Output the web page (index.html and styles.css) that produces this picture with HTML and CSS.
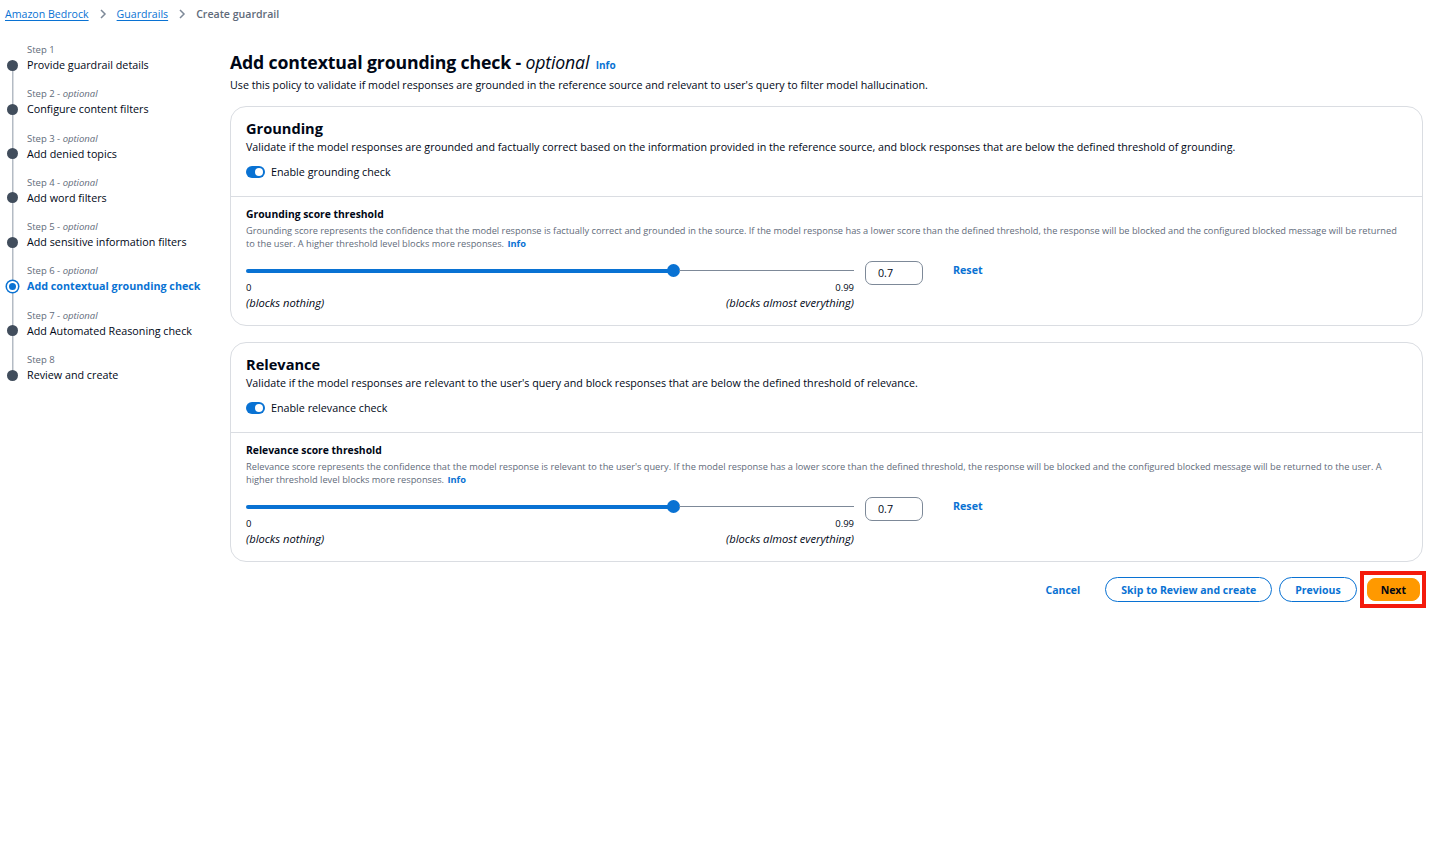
FILE: index.html
```html
<!DOCTYPE html>
<html lang="en">
<head>
<meta charset="utf-8">
<title>Create guardrail</title>
<link rel="stylesheet" href="styles.css">
</head>
<body>
<nav class="crumbs">
  <a href="#" class="crumb-link">Amazon Bedrock</a>
  <svg class="chev" width="10" height="10" viewBox="0 0 10 10"><path d="M3 1l4 4-4 4" fill="none" stroke="#7d8998" stroke-width="1.5"/></svg>
  <a href="#" class="crumb-link">Guardrails</a>
  <svg class="chev" width="10" height="10" viewBox="0 0 10 10"><path d="M3 1l4 4-4 4" fill="none" stroke="#7d8998" stroke-width="1.5"/></svg>
  <span class="crumb-current">Create guardrail</span>
</nav>
<div class="layout">
  <ol class="steps">
    <li class="step"><span class="step-label">Step 1</span><span class="dot"></span><span class="step-title">Provide guardrail details</span></li>
    <li class="step"><span class="step-label">Step 2 - <i>optional</i></span><span class="dot"></span><span class="step-title">Configure content filters</span></li>
    <li class="step"><span class="step-label">Step 3 - <i>optional</i></span><span class="dot"></span><span class="step-title">Add denied topics</span></li>
    <li class="step"><span class="step-label">Step 4 - <i>optional</i></span><span class="dot"></span><span class="step-title">Add word filters</span></li>
    <li class="step"><span class="step-label">Step 5 - <i>optional</i></span><span class="dot"></span><span class="step-title">Add sensitive information filters</span></li>
    <li class="step active"><span class="step-label">Step 6 - <i>optional</i></span><span class="dot"></span><span class="step-title">Add contextual grounding check</span></li>
    <li class="step"><span class="step-label">Step 7 - <i>optional</i></span><span class="dot"></span><span class="step-title">Add Automated Reasoning check</span></li>
    <li class="step"><span class="step-label">Step 8</span><span class="dot"></span><span class="step-title">Review and create</span></li>
  </ol>
  <main class="main">
    <h1 class="page-title">Add contextual grounding check - <i class="opt">optional</i> <a href="#" class="info">Info</a></h1>
    <p class="page-desc">Use this policy to validate if model responses are grounded in the reference source and relevant to user's query to filter model hallucination.</p>

    <section class="card">
      <div class="card-head">
        <h2 class="card-title">Grounding</h2>
        <p class="card-desc">Validate if the model responses are grounded and factually correct based on the information provided in the reference source, and block responses that are below the defined threshold of grounding.</p>
        <label class="toggle-row"><span class="toggle"><span class="knob"></span></span>Enable grounding check</label>
      </div>
      <div class="card-body">
        <h3 class="field-label">Grounding score threshold</h3>
        <p class="field-desc">Grounding score represents the confidence that the model response is factually correct and grounded in the source. If the model response has a lower score than the defined threshold, the response will be blocked and the configured blocked message will be returned to the user. A higher threshold level blocks more responses. <a href="#" class="info">Info</a></p>
        <div class="slider-row">
          <div class="slider">
            <div class="track"><div class="fill" style="width:70.3%"></div><span class="thumb"></span><div class="rest"></div></div>
            <div class="ticks"><span>0</span><span>0.99</span></div>
            <div class="ticks ends"><i>(blocks nothing)</i><i>(blocks almost everything)</i></div>
          </div>
          <div class="value-box">0.7</div>
          <a href="#" class="reset">Reset</a>
        </div>
      </div>
    </section>

    <section class="card">
      <div class="card-head">
        <h2 class="card-title">Relevance</h2>
        <p class="card-desc">Validate if the model responses are relevant to the user's query and block responses that are below the defined threshold of relevance.</p>
        <label class="toggle-row"><span class="toggle"><span class="knob"></span></span>Enable relevance check</label>
      </div>
      <div class="card-body">
        <h3 class="field-label">Relevance score threshold</h3>
        <p class="field-desc">Relevance score represents the confidence that the model response is relevant to the user's query. If the model response has a lower score than the defined threshold, the response will be blocked and the configured blocked message will be returned to the user. A higher threshold level blocks more responses. <a href="#" class="info">Info</a></p>
        <div class="slider-row">
          <div class="slider">
            <div class="track"><div class="fill" style="width:70.3%"></div><span class="thumb"></span><div class="rest"></div></div>
            <div class="ticks"><span>0</span><span>0.99</span></div>
            <div class="ticks ends"><i>(blocks nothing)</i><i>(blocks almost everything)</i></div>
          </div>
          <div class="value-box">0.7</div>
          <a href="#" class="reset">Reset</a>
        </div>
      </div>
    </section>

    <div class="actions">
      <a href="#" class="btn-link">Cancel</a>
      <button class="btn">Skip to Review and create</button>
      <button class="btn">Previous</button>
      <span class="highlight"><button class="btn btn-primary">Next</button></span>
    </div>
  </main>
</div>
</body>
</html>
```

FILE: styles.css
```css
* { box-sizing: border-box; }
html, body { margin: 0; padding: 0; background: #fff; }
body {
  font-family: "Open Sans", "Noto Sans", sans-serif;
  color: #000716;
  font-size: 10.7px;
}
a { text-decoration: none; color: #0972d3; }
p, h1, h2, h3, ol { margin: 0; padding: 0; }

.crumbs {
  display: flex;
  align-items: center;
  gap: 9px;
  height: 28px;
  padding-left: 5px;
  font-size: 10.6px;
}
.crumb-link { color: #0972d3; text-decoration: underline; text-underline-offset: 2px; }
.crumb-current { color: #5f6b7a; font-weight: 600; }

.layout {
  display: flex;
  align-items: flex-start;
}

.steps {
  list-style: none;
  width: 230px;
  flex: none;
  padding-top: 14px;
  background: linear-gradient(#b4bbc4, #b4bbc4) no-repeat 11.5px 37px / 1.5px 310px;
}
.step {
  display: grid;
  grid-template-columns: 27px auto;
  grid-template-rows: 15px 16px;
  align-items: center;
  margin-bottom: 13.3px;
}
.step-label {
  grid-column: 2;
  grid-row: 1;
  font-size: 9.5px;
  color: #5f6b7a;
}
.step-label i { font-style: italic; }
.dot {
  grid-column: 1;
  grid-row: 2;
  justify-self: start;
  margin-left: 7px;
  width: 11px;
  height: 11px;
  border-radius: 50%;
  background: #414d5c;
}
.step-title {
  grid-column: 2;
  grid-row: 2;
  font-size: 10.75px;
  color: #000716;
}
.step.active .dot {
  background: #0972d3;
  border: 2.5px solid #fff;
  box-shadow: 0 0 0 1.5px #0972d3;
  width: 11px;
  height: 11px;
  margin-left: 6.5px;
}
.step.active .step-title { color: #0972d3; font-weight: 700; }

.main {
  flex: 1;
  padding-right: 8px;
  padding-top: 22px;
}
.page-title {
  font-size: 17.7px;
  font-weight: 700;
  line-height: 24px;
  letter-spacing: -0.15px;
}
.page-title .opt { font-weight: 400; }
.page-title .info { font-size: 10px; font-weight: 700; margin-left: 2px; letter-spacing: 0; }
.page-desc {
  font-size: 10.7px;
  color: #000716;
  margin-top: 0;
  line-height: 16px;
}

.card {
  margin-top: 13px;
  border: 1px solid #dadde2;
  border-radius: 16px;
  background: #fff;
}
.card + .card { margin-top: 16px; }
.card-head {
  padding: 11px 15px 16px;
  border-bottom: 1px solid #dadde2;
}
.card-title {
  font-size: 14.6px;
  font-weight: 700;
  line-height: 20px;
}
.card-desc {
  margin-top: 1px;
  font-size: 10.7px;
  line-height: 16px;
}
.toggle-row {
  display: flex;
  align-items: center;
  gap: 6px;
  margin-top: 9px;
  font-size: 10.75px;
  line-height: 16px;
}
.toggle {
  width: 19px;
  height: 12px;
  border-radius: 6px;
  background: #0972d3;
  display: flex;
  align-items: center;
  justify-content: flex-end;
  padding-right: 2px;
}
.knob {
  width: 8px;
  height: 8px;
  border-radius: 50%;
  background: #fff;
}

.card-body {
  padding: 10px 15px 14px;
}
.field-label {
  font-size: 10.35px;
  font-weight: 700;
  line-height: 14px;
}
.field-desc {
  margin-top: 4px;
  font-size: 9.25px;
  line-height: 12.5px;
  color: #5f6b7a;
}
.field-desc .info { font-weight: 700; margin-left: 1px; }

.slider-row {
  display: flex;
  align-items: flex-start;
  margin-top: 14px;
}
.slider {
  width: 608px;
  flex: none;
}
.track {
  display: flex;
  align-items: center;
  height: 13px;
}
.fill {
  height: 4px;
  border-radius: 2px;
  background: #0972d3;
}
.thumb {
  width: 13px;
  height: 13px;
  border-radius: 50%;
  background: #0972d3;
  flex: none;
  margin-left: -6px;
  margin-right: -1px;
}
.rest {
  flex: 1;
  height: 1px;
  background: #7d8998;
}
.ticks {
  display: flex;
  justify-content: space-between;
  font-size: 9.5px;
  line-height: 13px;
  margin-top: 4px;
}
.ticks.ends {
  font-size: 11.2px;
  margin-top: 1px;
  line-height: 16px;
}
.value-box {
  margin-left: 11px;
  margin-top: -3px;
  width: 58px;
  height: 24px;
  border: 1px solid #7d8998;
  border-radius: 7px;
  padding-left: 12px;
  font-size: 10.7px;
  line-height: 22px;
}
.reset {
  margin-left: 30px;
  margin-top: -1px;
  font-size: 10.7px;
  font-weight: 700;
}

.actions {
  display: flex;
  justify-content: flex-end;
  align-items: center;
  gap: 7px;
  margin-top: 9px;
  margin-right: -3px;
}
.btn-link {
  font-weight: 700;
  font-size: 10.5px;
  margin-right: 18px;
}
.btn {
  font-family: inherit;
  font-size: 10.5px;
  font-weight: 700;
  color: #0972d3;
  background: #fff;
  border: 1.5px solid #0972d3;
  border-radius: 13px;
  height: 25px;
  padding: 0 15px;
  cursor: pointer;
}
.highlight {
  display: inline-flex;
  border: 4px solid #f41a0c;
  padding: 3px 2px 3px 3px;
  margin-left: -4px;
}
.btn-primary {
  background: #ff9900;
  border-color: #ff9900;
  color: #000716;
  height: 23px;
  border-radius: 8px;
  padding: 0 13px;
}
```
